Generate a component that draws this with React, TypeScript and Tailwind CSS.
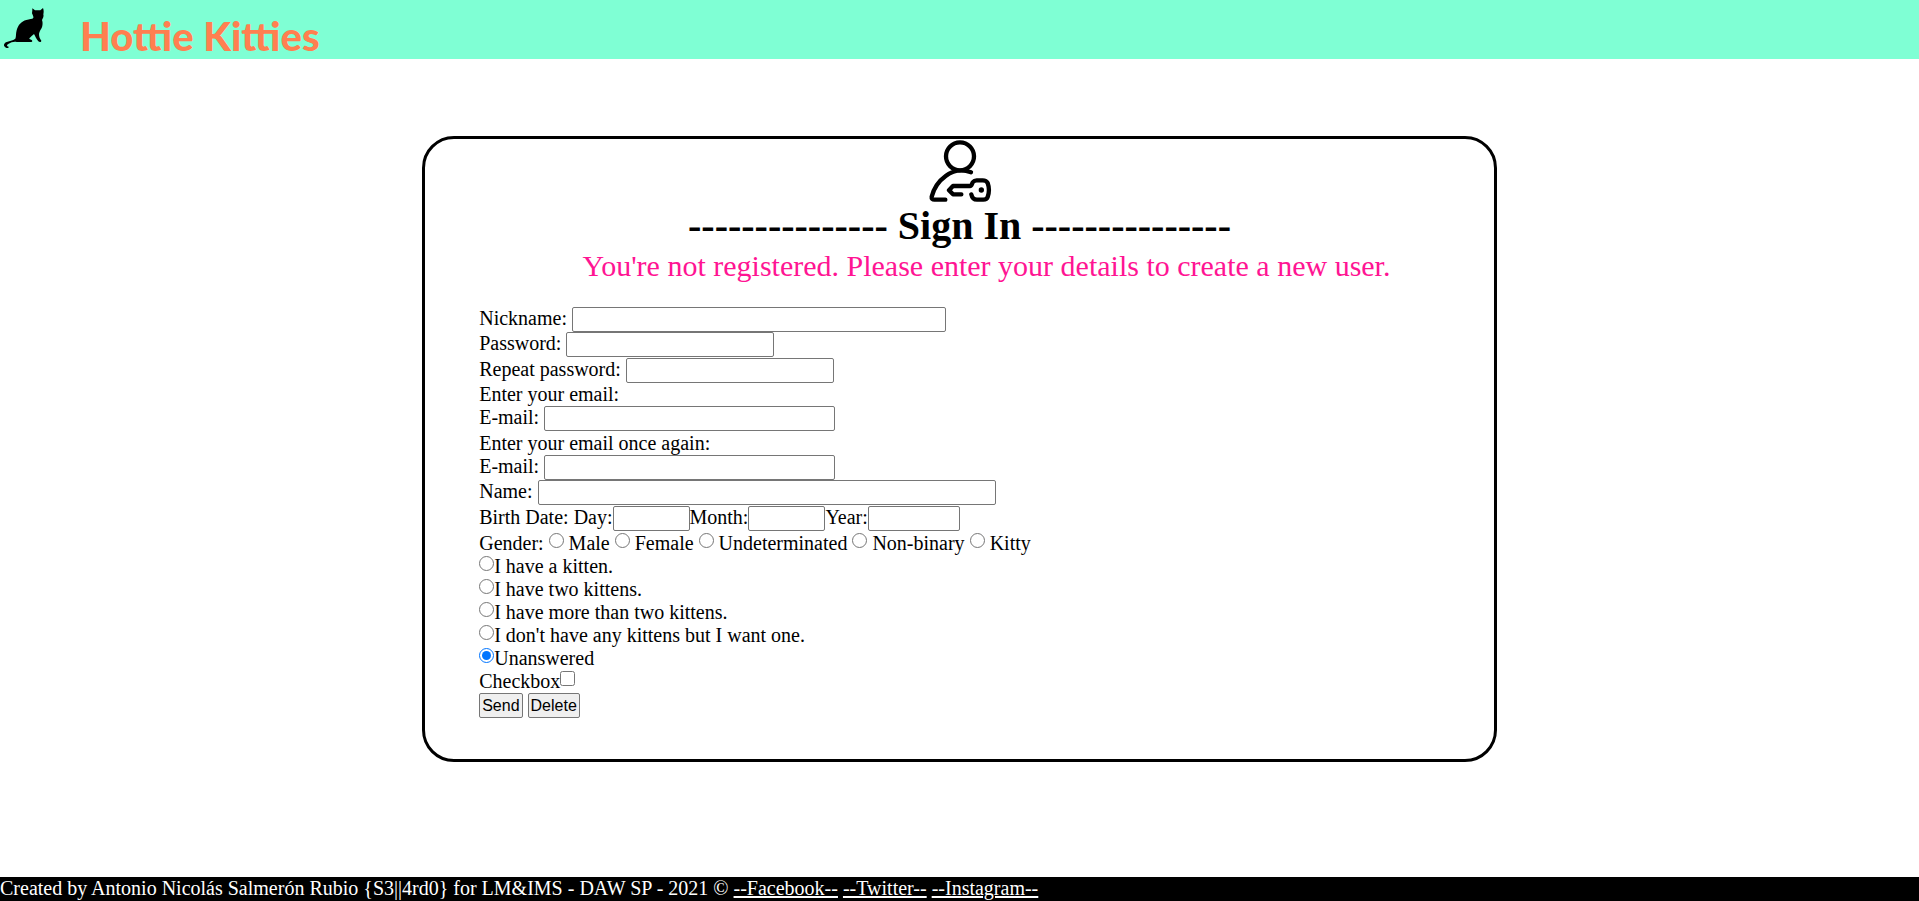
import React from "react";

type FieldProps = {
  id: string;
  label: string;
  width: string;
  type?: string;
  tall?: boolean;
};

const box = "h-[25px] rounded-[2px] border border-[#767676] bg-white px-1 text-base outline-offset-0";

function Field({ id, label, width, type = "text", tall = false }: FieldProps) {
  return (
    <div className={`flex items-start gap-[5px] ${tall ? "h-[26px]" : "h-[25px]"}`}>
      <label htmlFor={id}>{label}</label>
      <input id={id} name={id} type={type} className={`${box} ${width}`} />
    </div>
  );
}

function DatePart({ id, label, width }: { id: string; label: string; width: string }) {
  return (
    <>
      <label htmlFor={id}>{label}</label>
      <input id={id} name={id} type="text" className={`${box} ${width}`} />
    </>
  );
}

const genders = ["Male", "Female", "Undeterminated", "Non-binary", "Kitty"];
const kittens = [
  "I have a kitten.",
  "I have two kittens.",
  "I have more than two kittens.",
  "I don't have any kittens but I want one.",
  "Unanswered",
];

function CatLogo() {
  return (
    <svg viewBox="0 0 180 180" className="size-[60px] shrink-0" aria-hidden="true">
      <path d="M97 25 L105 31 H121 L129 24 C132 31 131 38 130 43 C132 49 129 55 126 60 C129 68 128 77 125 84 C121 91 118 95 117 102 C117 110 119 115 124 122 C124 126 119 127 115 124 C109 117 106 109 102 102 C98 106 92 110 88 115 C87 118 96 119 97 123 C97 126 93 126 89 126 H50 C42 124 33 127 26 131 C20 134 19 138 26 140 C27 144 22 145 18 143 C9 139 11 131 18 127 C27 122 39 122 46 116 C49 111 47 101 50 91 C54 75 64 64 79 60 C88 57 97 58 100 54 C101 49 98 46 96 40 C97 35 97 30 97 25 Z" />
    </svg>
  );
}

function UserKeyIcon() {
  return (
    <svg viewBox="0 0 192 192" className="mx-auto block size-16" fill="none" stroke="black" strokeWidth="13" strokeLinecap="round" strokeLinejoin="round" aria-hidden="true">
      <circle cx="96" cy="52" r="42" />
      <path d="M129 100 C105 91 76 94 54 110 C29 128 16 153 11 173 C10 179 14 182 19 182 H52" />
      <path d="M100 166 H75 L63 154 L75 141 H126 C132 141 131 134 135 129 C138 125 141 124 146 124 H164 C172 124 176 126 179 132 C184 146 184 160 179 174 C177 180 173 182 166 182 H147 C137 182 132 176 130 166" />
      <circle cx="160" cy="153" r="8" fill="black" stroke="none" />
    </svg>
  );
}

export default function App() {
  return (
    <div className="flex min-h-screen flex-col bg-white font-['Liberation_Serif','Times_New_Roman',serif] text-xl leading-[23px] text-black">
      <header className="flex h-[59px] items-start bg-[#7fffd4]">
        <CatLogo />
        <h1 className="pt-3 pl-5 font-['Lato','Gill_Sans',sans-serif] text-[40px] leading-[48px] font-black text-[#ff7f50]">
          Hottie Kitties
        </h1>
      </header>

      <main className="mx-auto mt-[77px] w-[56%] rounded-[32px] border-3 border-black pb-[41px]">
        <UserKeyIcon />
        <h2 className="text-center text-[40px] leading-[46px] font-bold">
          --------------- Sign In ---------------
        </h2>
        <form className="pl-[54px]" onSubmit={(e) => e.preventDefault()}>
          <p className="mb-6 text-center text-3xl leading-[34px] text-[#ff1493]">
            You're not registered. Please enter your details to create a new user.
          </p>
          <Field id="nickname" label="Nickname:" width="w-[374px]" />
          <Field id="password" label="Password:" type="password" width="w-52" tall />
          <Field id="repeat" label="Repeat password:" type="password" width="w-52" />
          <p>Enter your email:</p>
          <Field id="email" label="E-mail:" type="email" width="w-[291px]" tall />
          <p>Enter your email once again:</p>
          <Field id="email-again" label="E-mail:" type="email" width="w-[291px]" />
          <Field id="name" label="Name:" width="w-[458px]" tall />
          <div className="flex h-[26px] items-start">
            <span className="mr-[5px]">Birth Date:</span>
            <DatePart id="day" label="Day:" width="w-[77px]" />
            <DatePart id="month" label="Month:" width="w-[77px]" />
            <DatePart id="year" label="Year:" width="w-[92px]" />
          </div>
          <div className="flex items-start gap-[5px]">
            <span>Gender:</span>
            {genders.map((g) => (
              <label key={g} className="flex items-start gap-[5px]">
                <input type="radio" name="gender" className="mt-px size-[15px]" />
                {g}
              </label>
            ))}
          </div>
          {kittens.map((k) => (
            <label key={k} className="flex w-fit items-start">
              <input type="radio" name="kittens" defaultChecked={k === "Unanswered"} className="mt-px size-[15px]" />
              {k}
            </label>
          ))}
          <label className="flex w-fit items-start">
            Checkbox
            <input type="checkbox" name="check" className="mt-px size-[15px]" />
          </label>
          <div className="flex gap-[5px] font-['Liberation_Sans',Arial,sans-serif] text-base">
            <button type="submit" className="h-[25px] rounded-[2px] border border-[#767676] bg-[#efefef] px-0.5">Send</button>
            <button type="reset" className="h-[25px] rounded-[2px] border border-[#767676] bg-[#efefef] px-0.5">Delete</button>
          </div>
        </form>
      </main>

      <footer className="mt-auto h-6 bg-black text-white">
        Created by Antonio Nicolás Salmerón Rubio {"{S3||4rd0}"} for LM&amp;IMS - DAW SP - 2021 ©{" "}
        <a href="#facebook" className="underline">--Facebook--</a>{" "}
        <a href="#twitter" className="underline">--Twitter--</a>{" "}
        <a href="#instagram" className="underline">--Instagram--</a>
      </footer>
    </div>
  );
}
